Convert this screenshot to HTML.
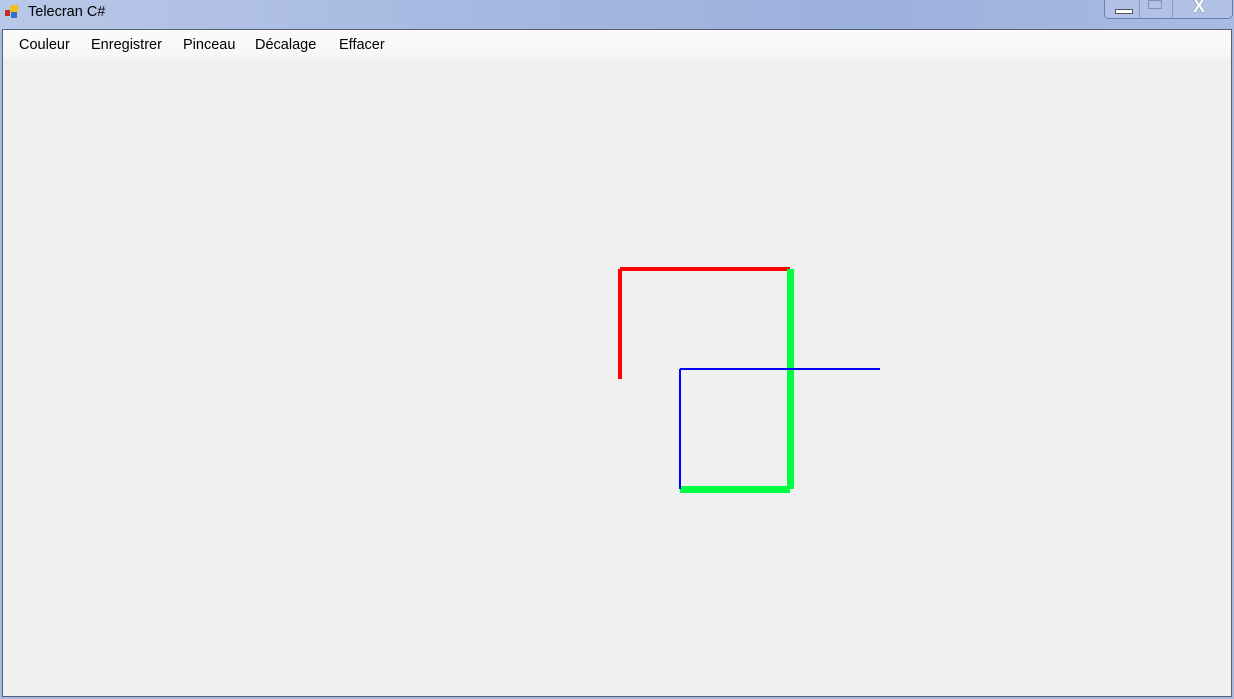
<!DOCTYPE html>
<html><head><meta charset="utf-8"><style>
body{margin:0;width:1234px;height:699px;overflow:hidden;position:relative;background:#a9b9df;font-family:"Liberation Sans",sans-serif}
#tb{position:absolute;left:0;top:0;width:1234px;height:30px;background:linear-gradient(90deg,#b8c8e8 0%,#a6b8e0 40%,#9cb0dc 70%,#a8bbe2 100%)}
#title{position:absolute;left:28px;top:4px;font-size:14.5px;color:#000}
#client{position:absolute;left:2px;top:29px;width:1228px;height:666px;border:1px solid #555f78;background:#f0f0f0}
#menu{position:absolute;left:0;top:0;width:1228px;height:29px;background:linear-gradient(#fbfbfb,#f6f6f6)}
#menu span{position:absolute;top:7px;font-size:14.5px;color:#000}
.ln{position:absolute}
#ctrl{position:absolute;left:1104px;top:-1px;width:127px;height:19px;border:1px solid #6d7fa8;border-top:none;border-radius:0 0 5px 5px;background:#b2c2e6}
</style></head><body>
<div id="tb">
<div style="position:absolute;left:5px;top:10px;width:5px;height:6px;background:#c03020"></div>
<div style="position:absolute;left:10px;top:5px;width:8px;height:7px;background:#f0c020"></div>
<div style="position:absolute;left:11px;top:12px;width:6px;height:6px;background:#3070d0"></div>
<div id="title">Telecran C#</div>
<div id="ctrl">
<div style="position:absolute;left:34px;top:0;width:1px;height:19px;background:#8898c0"></div>
<div style="position:absolute;left:67px;top:0;width:1px;height:19px;background:#8898c0"></div>
<div style="position:absolute;left:10px;top:10px;width:16px;height:3px;background:#fff;border:1px solid #555"></div>
<div style="position:absolute;left:43px;top:1px;width:12px;height:7px;border:1px solid #8090b8"></div>
<div style="position:absolute;left:88px;top:-3px;font-size:18px;font-weight:bold;color:#fff;text-shadow:0 0 1px #333">X</div>
</div>
</div>
<div id="client">
<div id="menu">
<span style="left:16px">Couleur</span>
<span style="left:88px">Enregistrer</span>
<span style="left:180px">Pinceau</span>
<span style="left:252px">Décalage</span>
<span style="left:336px">Effacer</span>
</div>
</div>
<div class="ln" style="left:618px;top:269px;width:4px;height:110px;background:#ff0000"></div>
<div class="ln" style="left:620px;top:267px;width:170px;height:4px;background:#ff0000"></div>
<div class="ln" style="left:787px;top:269px;width:7px;height:220px;background:#00ff40"></div>
<div class="ln" style="left:680px;top:486px;width:110px;height:7px;background:#00ff40"></div>
<div class="ln" style="left:679px;top:369px;width:2px;height:120px;background:#0000ff"></div>
<div class="ln" style="left:680px;top:368px;width:200px;height:2px;background:#0000ff"></div>
</body></html>
